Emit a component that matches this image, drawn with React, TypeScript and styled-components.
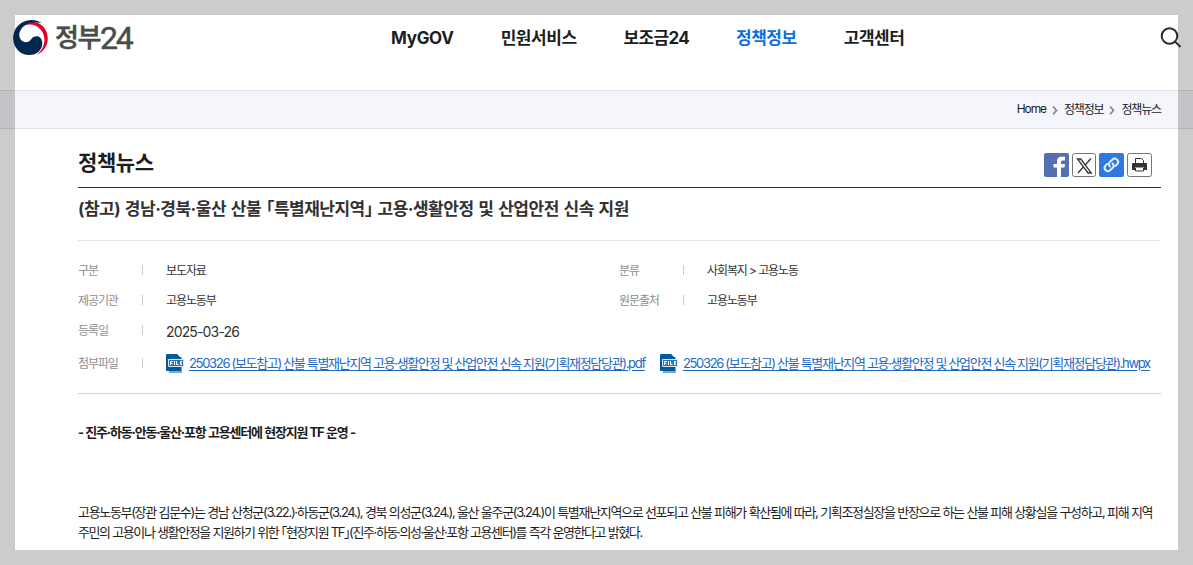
import type { ReactNode } from 'react';
import styled, { createGlobalStyle } from 'styled-components';

const GlobalStyle = createGlobalStyle`
  * {
    margin: 0;
    padding: 0;
    box-sizing: border-box;
  }

  body {
    height: 565px;
    overflow: hidden;
    background: #fff;
    color: #1d1d1d;
    font-family: Inter, 'Noto Sans CJK KR', sans-serif;
    font-feature-settings: 'halt';
  }

  a {
    color: inherit;
    text-decoration: none;
  }
`;

const Wrap = styled.div`
  position: relative;
  height: 565px;
  overflow: hidden;
`;
const Dim = styled.div`
  position: absolute;
  inset: 0;
  border: 15px solid rgba(0, 0, 0, 0.2);
  pointer-events: none;
`;
const Header = styled.header`
  position: relative;
  z-index: 1;
  height: 90px;
  padding: 15px 11px 0 13px;
  display: grid;
  grid-template-columns: 378px 1fr 22px;
  align-items: start;
`;
const Logo = styled.a`
  height: 45px;
  display: flex;
  align-items: center;
  color: #4b4b4b;

  svg {
    margin-right: 7px;
  }
`;
const LogoName = styled.span`
  padding-bottom: 3px;
  font: 500 26px/42px 'Noto Sans CJK KR', sans-serif;
  letter-spacing: -1.4px;
  -webkit-text-stroke: 0.5px #4b4b4b;
`;
const LogoNumber = styled.span`
  padding-top: 1px;
  font: 400 32px/44px Roboto, sans-serif;
  letter-spacing: -2.2px;
  -webkit-text-stroke: 0.5px #4b4b4b;
`;
const Nav = styled.nav`
  height: 45px;
  display: flex;
  align-items: center;
  gap: 47px;
`;
const NavItem = styled.a<{ $active?: boolean; $spacing?: number }>`
  color: ${({ $active }) => ($active ? '#0b6fe4' : '#1d1d1d')};
  font-size: 17px;
  font-weight: 700;
  line-height: 24px;
  letter-spacing: ${({ $spacing }) => $spacing ?? -0.45}px;
  white-space: nowrap;
`;
const SearchButton = styled.button`
  height: 45px;
  display: flex;
  align-items: center;
  border: 0;
  background: none;
`;
const Location = styled.div`
  height: 39px;
  padding-right: 32px;
  display: flex;
  align-items: center;
  justify-content: flex-end;
  gap: 6px;
  border-top: 1px solid #e0e2e8;
  border-bottom: 1px solid #e0e2e8;
  background: #f4f6fb;
  font-size: 12px;
  letter-spacing: -1.15px;

  span {
    padding-bottom: 2px;
  }
`;
const Container = styled.main`
  width: 1083px;
  margin-left: 78px;
`;
const Heading = styled.div`
  height: 59px;
  padding-right: 9px;
  display: flex;
  justify-content: space-between;
  border-bottom: 1px solid #333;

  h2 {
    padding-top: 18px;
    font-size: 21px;
    line-height: 32px;
    letter-spacing: -0.4px;
  }
`;
const ShareList = styled.div`
  padding-top: 24px;
  display: flex;
  gap: 3px;

  svg {
    display: block;
  }
`;
const Subject = styled.h3`
  height: 53px;
  padding-top: 1px;
  border-bottom: 1px solid #e5e5e5;
  color: #333;
  font-size: 17px;
  line-height: 40px;
  letter-spacing: -0.5px;
  word-spacing: 1.25px;
  white-space: nowrap;
`;
const InfoList = styled.div`
  height: 153px;
  padding-top: 14px;
  display: grid;
  grid-template-columns: 541px 1fr;
  grid-template-rows: 30px 30px 30px 36px;
  border-bottom: 1px solid #d0d2d4;
`;
const InfoRow = styled.dl<{ $wide?: boolean }>`
  grid-column: ${({ $wide }) => ($wide ? '1 / -1' : 'auto')};
  display: flex;
  align-items: center;
  font-size: 12px;
  letter-spacing: -1.1px;
  white-space: nowrap;

  dt {
    width: 65px;
    margin-right: 23px;
    flex-shrink: 0;
    display: flex;
    align-items: center;
    justify-content: space-between;
    color: #8e8e8e;
  }

  dt span {
    padding-bottom: 2px;
  }

  dt::after {
    content: '';
    width: 1px;
    height: 10px;
    background: #ccc;
  }

  dd {
    padding-bottom: 2px;
    color: #333;
  }
`;
const DateText = styled.dd`
  && {
    padding-top: 4px;
  }

  font-size: 14px;
  letter-spacing: -0.85px;
`;
const Files = styled.dd`
  display: flex;
  gap: 15px;
`;
const FileLink = styled.a`
  display: flex;
  align-items: center;
  gap: 5px;
  color: #1c68c4;
  font-size: 13px;
  letter-spacing: -1.32px;

  svg {
    position: relative;
    top: 1px;
  }

  span {
    text-decoration: underline;
    text-underline-offset: 2px;
  }
`;
const Content = styled.div`
  padding-top: 28px;
  font-size: 13px;
  line-height: 20px;
  letter-spacing: -1.32px;
  word-spacing: 0.3px;
  white-space: nowrap;

  strong {
    display: block;
    margin-bottom: 60px;
    letter-spacing: -1.2px;
    word-spacing: 0.55px;
  }

  p:last-child {
    letter-spacing: -1.4px;
  }
`;

const menus = [
  { name: 'MyGOV', spacing: -0.3 },
  { name: '민원서비스' },
  { name: '보조금24', spacing: -0.7 },
  { name: '정책정보', active: true },
  { name: '고객센터' }
];

const files = [
  '250326 (보도참고) 산불 특별재난지역 고용·생활안정 및 산업안전 신속 지원(기획재정담당관).pdf',
  '250326 (보도참고) 산불 특별재난지역 고용·생활안정 및 산업안전 신속 지원(기획재정담당관).hwpx'
];

const LogoMark = () => (
  <svg width='35' height='35' viewBox='0 0 104 104'>
    <path fill='#e4002b' d='M18 30C30 4 66-4 88 18C113 43 108 88 70 104C96 84 101 50 82 28C65 9 35 8 18 30Z'/>
    <path fill='#00284f' d='M86 10C58-10 18 2 5 32C-10 68 14 104 48 104C72 104 87 88 87 68C87 52 74 44 62 50C52 55 53 66 38 66C24 66 15 50 20 36C29 9 62 2 86 10Z'/>
  </svg>
);

const SearchIcon = () => (
  <svg width='22' height='22' viewBox='0 0 22 22' fill='none' stroke='#2b2b2b' strokeWidth='2'>
    <circle cx='9.5' cy='9' r='7.8'/>
    <path d='M15 14.5L20.5 20'/>
  </svg>
);

const Arrow = () => (
  <svg width='6' height='10' viewBox='0 0 6 10' fill='none' stroke='#857f85' strokeWidth='1.6'>
    <path d='M1 1.5L4.5 5.5L1 9.3'/>
  </svg>
);

const FileIcon = () => (
  <svg width='18' height='19' viewBox='0 0 18 19'>
    <path fill='#7ba9cb' d='M3 3H16V19H3Z'/>
    <path fill='#005a9c' d='M0 1Q0 0 1 0H11L15 4V17H1Q0 17 0 16Z'/>
    <path fill='#2d77ae' stroke='#d6e6f1' d='M2.5 5.5H17.5V12.5H2.5Z'/>
    <path fill='none' stroke='#fff' d='M4.5 11V7.5H7M4.5 9.5H6.5M8.5 7V11M10.5 7V10.5H12.5M16 7.5H14.5V10.5H16M14.5 9H16'/>
  </svg>
);

const InfoItem = ({ label, children }: { label: string; children: ReactNode }) => (
  <InfoRow>
    <dt><span>{label}</span></dt>
    <dd>{children}</dd>
  </InfoRow>
);

const App = () => {
  return (
    <Wrap>
      <GlobalStyle/>
      <Header>
        <Logo href='#'>
          <LogoMark/>
          <LogoName>정부</LogoName>
          <LogoNumber>24</LogoNumber>
        </Logo>
        <Nav>
          {menus.map(({ name, active, spacing }) => (
            <NavItem key={name} href='#' $active={active} $spacing={spacing}>{name}</NavItem>
          ))}
        </Nav>
        <SearchButton type='button'><SearchIcon/></SearchButton>
      </Header>

      <Location>
        <span>Home</span>
        <Arrow/>
        <span>정책정보</span>
        <Arrow/>
        <span>정책뉴스</span>
      </Location>

      <Container>
        <Heading>
          <h2>정책뉴스</h2>
          <ShareList>
            <svg width='25' height='24' viewBox='0 0 25 24'>
              <rect width='25' height='24' rx='2' fill='#5470b3'/>
              <path fill='#fff' d='M13 24V14.5H9.5V11H13V8.5C13 5 15 3.8 18 3.8H21V7.5H19C17.4 7.5 17 8 17 9.2V11H21L20.4 14.5H17V24Z'/>
            </svg>
            <svg width='24' height='24' viewBox='0 0 24 24' fill='none' stroke='#333'>
              <rect x='.5' y='.5' width='23' height='23' rx='2' fill='#fff' stroke='#777'/>
              <path strokeWidth='1.3' d='M5.5 6H8.8L19.3 20H16ZM19 5.5L13 12.2M11.3 14L6 20'/>
            </svg>
            <svg width='25' height='24' viewBox='0 0 25 24' fill='none' stroke='#e8f1ff' strokeWidth='1.9' strokeLinecap='round'>
              <rect width='25' height='24' rx='2' fill='#2f78e2' stroke='none'/>
              <path d='M11 13.5C9.5 12 9.6 10.2 11 8.8L13.3 6.8C14.8 5.4 16.8 5.4 18.2 6.8C19.5 8.2 19.4 10.2 18 11.5L16.3 13'/>
              <path d='M13.5 10.3C15 11.8 15 13.6 13.6 15L11.4 17C9.9 18.4 7.9 18.4 6.5 17C5.2 15.6 5.3 13.7 6.7 12.3L8.3 10.9'/>
            </svg>
            <svg width='25' height='24' viewBox='0 0 25 24'>
              <rect x='.5' y='.5' width='24' height='23' rx='2' fill='#fff' stroke='#777'/>
              <path fill='#333' d='M5 11Q5 10 6 10H19Q20 10 20 11V17H17V14.5H8V17H5Z'/>
              <path fill='none' stroke='#333' d='M8.5 10V5.5H14.5L16.5 7.5V10M8.5 15V18H16.5V15'/>
            </svg>
          </ShareList>
        </Heading>

        <Subject>(참고) 경남·경북·울산 산불 「특별재난지역」 고용·생활안정 및 산업안전 신속 지원</Subject>

        <InfoList>
          <InfoItem label='구분'>보도자료</InfoItem>
          <InfoItem label='분류'>사회복지 &gt; 고용노동</InfoItem>
          <InfoItem label='제공기관'>고용노동부</InfoItem>
          <InfoItem label='원문출처'>고용노동부</InfoItem>
          <InfoRow $wide>
            <dt><span>등록일</span></dt>
            <DateText>2025-03-26</DateText>
          </InfoRow>
          <InfoRow $wide>
            <dt><span>첨부파일</span></dt>
            <Files>
              {files.map(file => (
                <FileLink key={file} href='#'><FileIcon/><span>{file}</span></FileLink>
              ))}
            </Files>
          </InfoRow>
        </InfoList>

        <Content>
          <strong>- 진주·하동·안동·울산·포항 고용센터에 현장지원 TF 운영 -</strong>
          <p>고용노동부(장관 김문수)는 경남 산청군(3.22.)·하동군(3.24.), 경북 의성군(3.24.), 울산 울주군(3.24.)이 특별재난지역으로 선포되고 산불 피해가 확산됨에 따라, 기획조정실장을 반장으로 하는 산불 피해 상황실을 구성하고, 피해 지역</p>
          <p>주민의 고용이나 생활안정을 지원하기 위한 「현장지원 TF」(진주·하동·의성·울산·포항 고용센터)를 즉각 운영한다고 밝혔다.</p>
        </Content>
      </Container>
      <Dim/>
    </Wrap>
  );
};

export default App;
